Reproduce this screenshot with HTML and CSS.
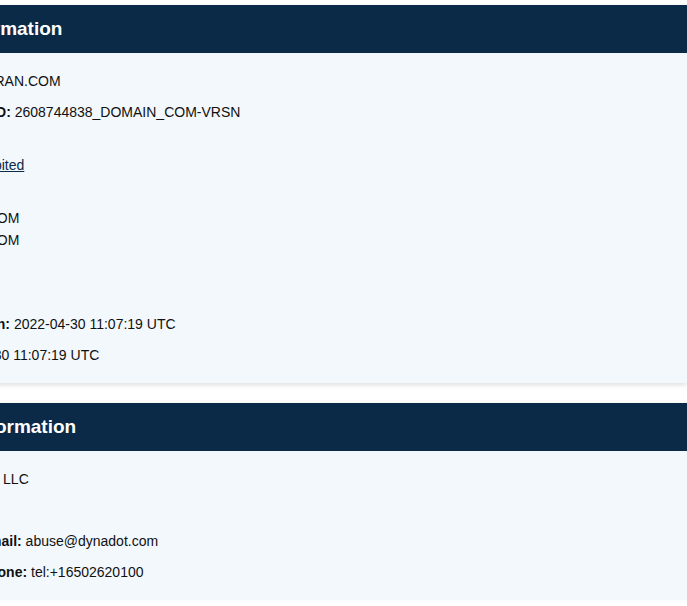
FILE: index.html
```html
<!DOCTYPE html>
<html lang="en">
<head>
    <meta charset="UTF-8">
    <title>WHOIS Lookup - MYVETERAN.COM</title>
    <link rel="stylesheet" href="styles.css">
</head>
<body>
    <div class="page">
        <!-- Domain details -->
        <section class="card">
            <h2 class="card-title">Domain Information</h2>
            <div class="card-body">
                <p><strong>Domain:</strong> MYVETERAN.COM</p>
                <p><strong>Registry Domain ID:</strong> 2608744838_DOMAIN_COM-VRSN</p>
                <p><strong>Status:</strong><br>
                    <a href="#">clientTransferProhibited</a></p>
                <p><strong>Name Servers:</strong><br>
                    NS01.DYNADOT.COM<br>
                    NS02.DYNADOT.COM</p>
                <p><strong>DNSSEC:</strong><br>
                    unsigned</p>
                <p><strong>Registry Expiration:</strong> 2022-04-30 11:07:19 UTC</p>
                <p><strong>Created:</strong> 2022-04-30 11:07:19 UTC</p>
            </div>
        </section>

        <!-- Registrar details -->
        <section class="card">
            <h2 class="card-title">Registrar Information</h2>
            <div class="card-body">
                <p><strong>Registrar:</strong> Dynadot LLC</p>
                <p><strong>IANA ID:</strong> 472</p>
                <p><strong>Abuse Contact Email:</strong> abuse@dynadot.com</p>
                <p><strong>Abuse Contact Phone:</strong> tel:+16502620100</p>
            </div>
        </section>
    </div>
</body>
</html>
```

FILE: styles.css
```css
body {
    font-family: "Liberation Sans", Arial, sans-serif;
    margin: 0;
    padding: 5px 0 0;
    background-color: #fff;
    color: #111;
}

/* page is wider than the window, left part sits outside */
.page {
    margin-left: -140px;
    display: flex;
    flex-direction: column;
    gap: 20px;
}

.card {
    background-color: #f2f8fc;
    box-shadow: 0 2px 5px rgba(0, 0, 0, 0.13);
}

.card-title {
    margin: 0;
    padding: 12px 23px;
    background-color: #0a2a47;
    color: #fff;
    font-size: 19px;
    line-height: 24px;
}

.card-body {
    padding: 17px 17px 17px;
    display: flex;
    flex-direction: column;
    gap: 9px;
}

.card-body p {
    margin: 0;
    font-size: 14px;
    line-height: 22px;
}

.card-body a {
    color: #0a2a47;
}
```
